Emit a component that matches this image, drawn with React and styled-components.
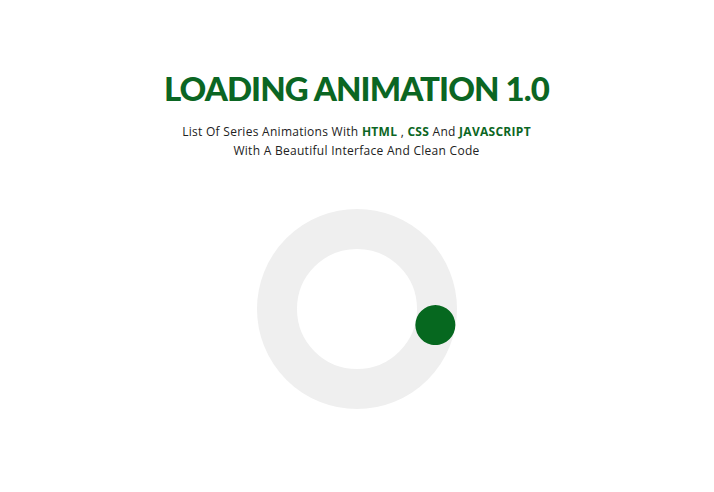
import React from "react";
import styled, { createGlobalStyle } from "styled-components";

const Global = createGlobalStyle`
  html, body { margin: 0; padding: 0; background: #ffffff; }
  body { font-family: "Open Sans", "Noto Sans", sans-serif; }
`;

const Page = styled.main`
  display: flex;
  flex-direction: column;
  align-items: center;
  padding: 66px 1px 0 0;
`;

const Title = styled.h1`
  margin: 0;
  font-family: "Lato", sans-serif;
  font-weight: 900;
  font-size: 33px;
  line-height: 44px;
  letter-spacing: -0.9px;
  color: #0b6623;
  text-transform: uppercase;
`;

const Subtitle = styled.p`
  margin: 12px 0 0;
  font-family: "Open Sans", sans-serif;
  font-size: 12px;
  line-height: 19px;
  letter-spacing: 0.28px;
  color: #222222;
  text-align: center;
`;

const Tech = styled.strong`
  font-weight: 700;
  color: #0b6623;
`;

const Loader = styled.div`
  position: relative;
  margin-top: 49px;
  width: 200px;
  height: 200px;
  box-sizing: border-box;
  border: 40px solid #efefef;
  border-radius: 50%;
`;

const Dot = styled.span`
  position: absolute;
  left: 50%;
  top: 50%;
  width: 40px;
  height: 40px;
  margin: -20px 0 0 -20px;
  border-radius: 50%;
  background: #06681f;
  transform: rotate(${(p) => p.$angle}deg) translateX(80px);
`;

export default function App() {
  return (
    <>
      <Global />
      <Page>
        <Title>Loading Animation 1.0</Title>
        <Subtitle>
          List Of Series Animations With <Tech>HTML</Tech> , <Tech>CSS</Tech> And{" "}
          <Tech>JAVASCRIPT</Tech>
          <br />
          With A Beautiful Interface And Clean Code
        </Subtitle>
        <Loader>
          <Dot $angle={11.6} />
        </Loader>
      </Page>
    </>
  );
}
